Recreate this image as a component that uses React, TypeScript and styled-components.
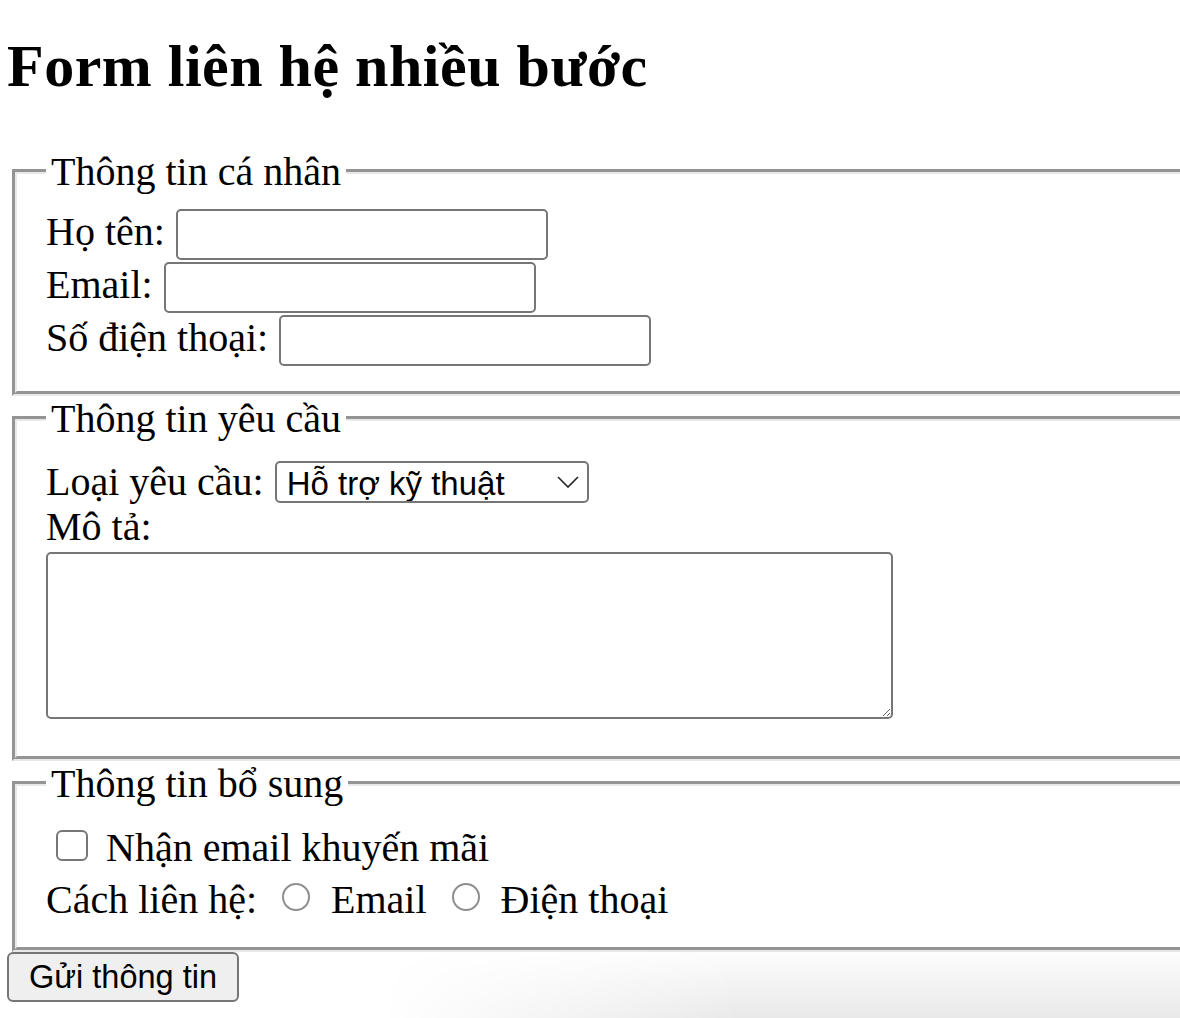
import React from "react";
import styled, { createGlobalStyle } from "styled-components";

const Global = createGlobalStyle`
  html, body { margin: 0; padding: 0; background: #ffffff; }
  body {
    font-family: "Liberation Serif", "Times New Roman", serif;
    color: #000;
    overflow: hidden;
  }
`;

const Page = styled.div`
  width: 1400px;
  padding: 32px 0 0 7px;
  box-sizing: border-box;
`;

const Title = styled.h1`
  margin: 0 0 49px;
  font-size: 60px;
  letter-spacing: 0.5px;
  font-weight: bold;
  line-height: 68px;
`;

const Form = styled.form`
  display: flex;
  flex-direction: column;
  align-items: flex-start;
`;

const Fieldset = styled.fieldset`
  align-self: stretch;
  margin: 0 5px;
  padding: 15px 29px 25px;
  border: 5px groove rgb(232, 232, 232);
  min-width: 0;
  display: flex;
  flex-direction: column;
  align-items: flex-start;
`;

const Legend = styled.legend`
  padding: 0 5px;
  font-size: 40px;
  line-height: 45px;
`;

const Rows = styled.div`
  display: flex;
  flex-direction: column;
  gap: 2px;
`;

const Row = styled.div<{ $top?: number }>`
  display: flex;
  align-items: baseline;
  gap: 11px;
  margin-top: ${(p) => p.$top ?? 0}px;
`;

const Label = styled.label`
  font-size: 40px;
  line-height: 45px;
  white-space: nowrap;
`;

const TextInput = styled.input`
  width: 372px;
  height: 51px;
  box-sizing: border-box;
  border: 2px solid #767676;
  border-radius: 5px;
  padding: 0 5px;
  font-family: "Liberation Sans", Arial, sans-serif;
  font-size: 32.5px;
  background: #fff;
  outline: none;
`;

const SelectWrap = styled.span`
  position: relative;
  display: inline-flex;
`;

const Select = styled.select`
  appearance: none;
  -webkit-appearance: none;
  width: 314px;
  height: 42px;
  box-sizing: border-box;
  border: 2px solid #767676;
  border-radius: 5px;
  padding: 2px 0 0 10px;
  font-family: "Liberation Sans", Arial, sans-serif;
  font-size: 33px;
  color: #000;
  background: #fff;
  outline: none;
`;

const Chevron = styled.svg`
  position: absolute;
  right: 10px;
  top: 15px;
  pointer-events: none;
`;

const TextArea = styled.textarea`
  display: block;
  width: 847px;
  height: 167px;
  box-sizing: border-box;
  margin: 3px 0 12px;
  border: 2px solid #767676;
  border-radius: 5px;
  font-family: "Liberation Mono", monospace;
  font-size: 32px;
  background: #fff;
  outline: none;
`;

const CheckRow = styled.div`
  display: flex;
  align-items: center;
  margin-top: 4px;
`;

const Checkbox = styled.input`
  appearance: none;
  -webkit-appearance: none;
  width: 32px;
  height: 31px;
  box-sizing: border-box;
  margin: 0 18px 4px 10px;
  border: 2.5px solid #767676;
  border-radius: 6px;
  background: #fff;
`;

const RadioRow = styled.div`
  display: flex;
  align-items: center;
  margin-top: 7px;
`;

const RadioOption = styled.label`
  display: flex;
  align-items: center;
  gap: 21px;
  font-size: 40px;
  line-height: 45px;
  margin-left: 25px;
`;

const Radio = styled.input`
  appearance: none;
  -webkit-appearance: none;
  width: 28px;
  height: 28px;
  box-sizing: border-box;
  margin: 0 0 6px 0;
  border: 2px solid #8e8e8e;
  border-radius: 50%;
  background: #fff;
`;

const SubmitButton = styled.button`
  margin-top: 0;
  height: 50px;
  padding: 0 20px;
  box-sizing: border-box;
  border: 2px solid #767676;
  border-radius: 6px;
  background: #efefef;
  font-family: "Liberation Sans", Arial, sans-serif;
  font-size: 32.5px;
  color: #000;
`;

const Shade = styled.div`
  position: fixed;
  left: 380px;
  right: 0;
  bottom: 0;
  height: 72px;
  pointer-events: none;
  background: linear-gradient(180deg, rgba(0, 0, 0, 0) 0%, rgba(0, 0, 0, 0.035) 40%, rgba(0, 0, 0, 0.085) 100%);
  -webkit-mask-image: linear-gradient(90deg, transparent 0%, #000 45%, #000 100%);
  mask-image: linear-gradient(90deg, transparent 0%, #000 45%, #000 100%);
`;

export default function App() {
  return (
    <>
      <Global />
      <Page>
        <Title>Form liên hệ nhiều bước</Title>
        <Form onSubmit={(e) => e.preventDefault()}>
          <Fieldset>
            <Legend>Thông tin cá nhân</Legend>
            <Rows>
              <Row>
                <Label htmlFor="name">Họ tên:</Label>
                <TextInput id="name" type="text" />
              </Row>
              <Row>
                <Label htmlFor="email">Email:</Label>
                <TextInput id="email" type="email" />
              </Row>
              <Row>
                <Label htmlFor="phone">Số điện thoại:</Label>
                <TextInput id="phone" type="tel" />
              </Row>
            </Rows>
          </Fieldset>

          <Fieldset>
            <Legend>Thông tin yêu cầu</Legend>
            <Row $top={3}>
              <Label htmlFor="type">Loại yêu cầu:</Label>
              <SelectWrap>
                <Select id="type" defaultValue="tech">
                  <option value="tech">Hỗ trợ kỹ thuật</option>
                  <option value="sales">Tư vấn bán hàng</option>
                  <option value="other">Khác</option>
                </Select>
                <Chevron width="22" height="12" viewBox="0 0 22 12">
                  <polyline points="1,1 11,11 21,1" fill="none" stroke="#222" strokeWidth="1.6" />
                </Chevron>
              </SelectWrap>
            </Row>
            <Label htmlFor="desc">Mô tả:</Label>
            <TextArea id="desc" />
          </Fieldset>

          <Fieldset>
            <Legend>Thông tin bổ sung</Legend>
            <CheckRow>
              <Checkbox id="promo" type="checkbox" />
              <Label htmlFor="promo">Nhận email khuyến mãi</Label>
            </CheckRow>
            <RadioRow>
              <Label>Cách liên hệ:</Label>
              <RadioOption>
                <Radio type="radio" name="contact" value="email" />
                Email
              </RadioOption>
              <RadioOption>
                <Radio type="radio" name="contact" value="phone" />
                Điện thoại
              </RadioOption>
            </RadioRow>
          </Fieldset>

          <SubmitButton type="submit">Gửi thông tin</SubmitButton>
        </Form>
      </Page>
      <Shade />
    </>
  );
}
